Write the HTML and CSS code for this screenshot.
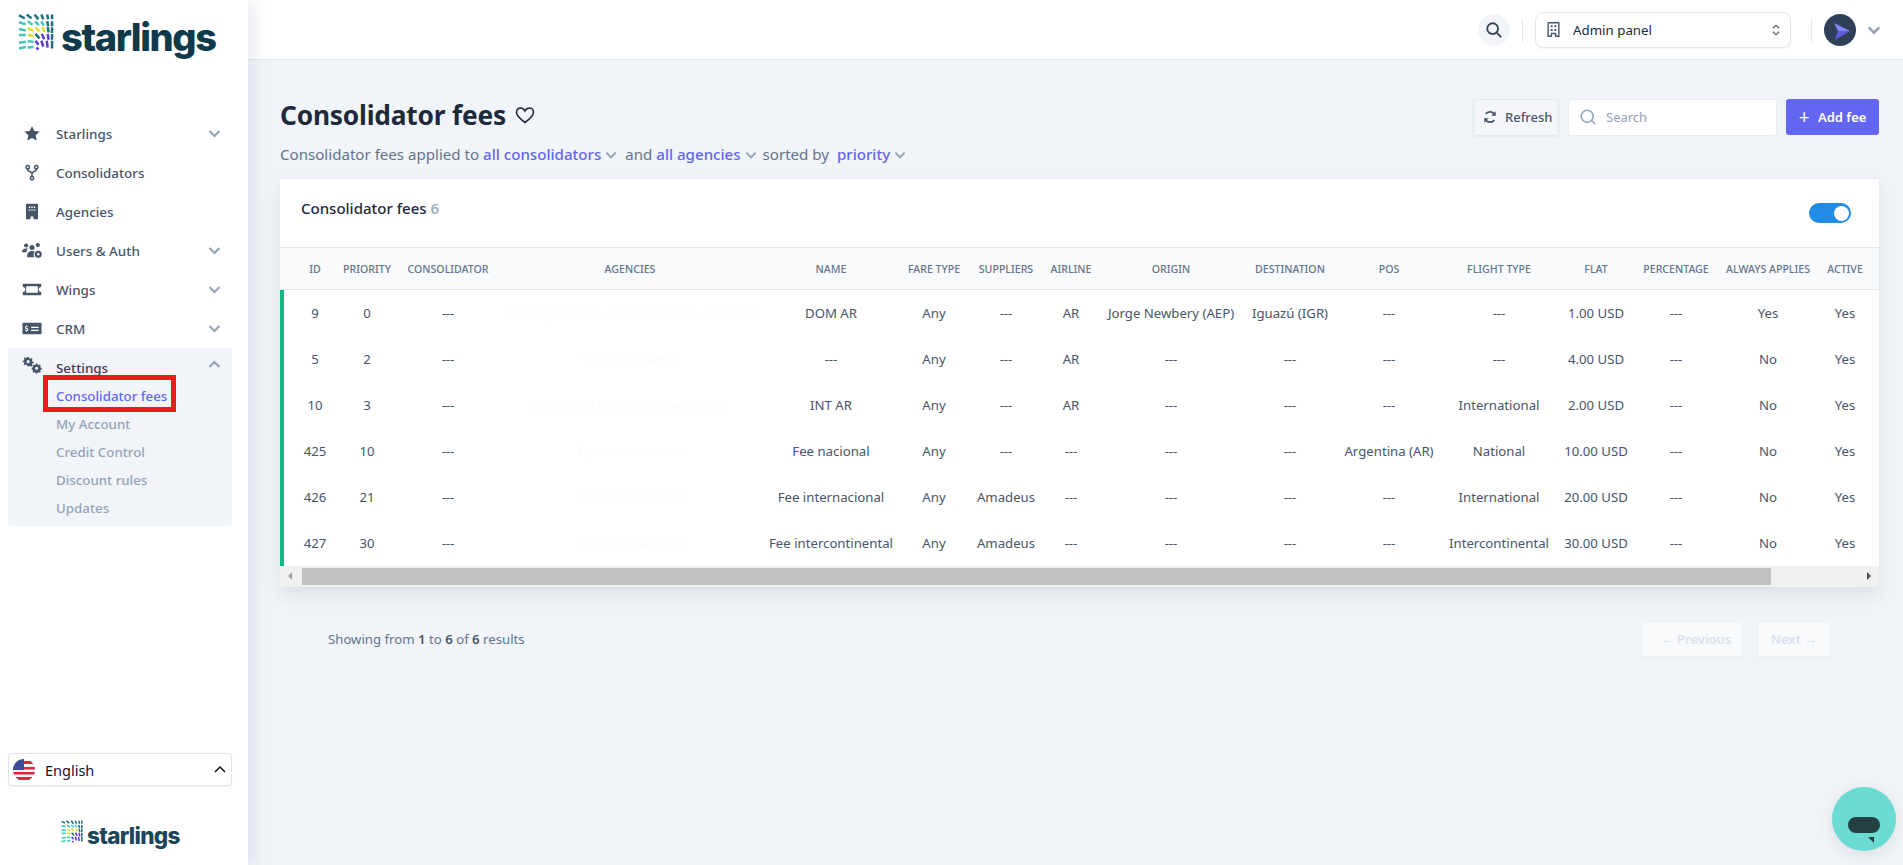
FILE: index.html
```html
<!DOCTYPE html>
<html lang="en">
<head>
    <meta charset="UTF-8">
    <title>Consolidator fees</title>
    <link rel="stylesheet" href="styles.css">
</head>
<body>
    <svg class="defs" width="0" height="0">
        <symbol id="mark" viewBox="0 0 37 38">
            <g fill="none" stroke-width="2.600" stroke-linecap="butt">
                <path stroke="#1f6f7d" d="M1 2l6 3M9 1l5 4M17 1l4 5M24 1l2 5M30 1l1 5M35 1v5M30 8l1 5M35 8v5M30.500 14l1 5.500M35 14v6M18 21l4 4.500M35 21v6M35 28v8"/>
                <path stroke="#45c7bb" d="M1 9l7 2M10 8l5 3.500M17.500 8l4 4M24 8l2.500 4.500M1 16l7 1.500M1 22h7M1 30l7-1M10 28.500l6 .5M1 36l7-1.500M10 35l6-.5"/>
                <path stroke="#dfe02a" d="M10 15l6 3M18 14.500l4 4M25 14l2.500 5M10 21.500l6 2"/>
                <path stroke="#5a3fd4" d="M24.500 21l2.500 5.500M30.500 21l1 6M18 28l3 4M24 28l2 6M29.500 28l1 7M19 35l2 2"/>
            </g>
        </symbol>
    </svg>

    <aside class="sidebar">
        <div class="logo">
            <svg class="logo-mark"><use href="#mark"/></svg>
            <span class="logo-text">starlings</span>
        </div>

        <nav class="nav">
            <a class="nav-item">
                <svg class="nav-icon" viewBox="0 0 24 24"><path d="M12 1.500l3.200 6.900 7.500.9-5.500 5.200 1.500 7.500L12 18.300l-6.700 3.700 1.500-7.500L1.300 9.300l7.500-.9z"/></svg>
                <span class="nav-label">Starlings</span>
                <svg class="chev" viewBox="0 0 12 12"><path d="M2 4l4 4 4-4"/></svg>
            </a>
            <a class="nav-item">
                <svg class="nav-icon line" viewBox="0 0 24 24"><circle cx="6" cy="4.500" r="2.400"/><circle cx="18" cy="4.500" r="2.400"/><circle cx="12" cy="20" r="2.400"/><path d="M6 7v1.500c0 2.500 6 2 6 5v4M18 7v1.500c0 2.500-6 2-6 5"/></svg>
                <span class="nav-label">Consolidators</span>
            </a>
            <a class="nav-item">
                <svg class="nav-icon" viewBox="0 0 24 24"><path fill-rule="evenodd" d="M5 1h14a1.500 1.500 0 0 1 1.500 1.500V23H14v-4h-4v4H3.500V2.500A1.500 1.500 0 0 1 5 1zM7.500 5v2h2V5zm3.500 0v2h2V5zm3.500 0v2h2V5zM7.500 9v2h2V9zM11 9v2h2V9zm3.500 0v2h2V9z"/></svg>
                <span class="nav-label">Agencies</span>
            </a>
            <a class="nav-item">
                <svg class="nav-icon" viewBox="0 0 24 20"><circle cx="5" cy="4" r="2.500"/><circle cx="19" cy="3.500" r="2.500"/><circle cx="12" cy="6.500" r="3"/><path d="M0 12c0-3 2-4.500 4-4.500h3c-1 1-1.500 2.500-1.500 4.500zM6 18c0-5 2-7.500 6-7.500 1.500 0 2.500.3 3.500 1-1.500 1.500-2 3.500-1 6.500z"/><circle cx="19.500" cy="14.500" r="4.200"/><circle cx="19.500" cy="14.500" r="1.500" fill="#fff"/></svg>
                <span class="nav-label">Users &amp; Auth</span>
                <svg class="chev" viewBox="0 0 12 12"><path d="M2 4l4 4 4-4"/></svg>
            </a>
            <a class="nav-item">
                <svg class="nav-icon" viewBox="0 0 24 20"><path fill-rule="evenodd" d="M1 3h22v4a3 3 0 0 0 0 6v4H1v-4a3 3 0 0 0 0-6zM5 6v8h14V6z"/></svg>
                <span class="nav-label">Wings</span>
                <svg class="chev" viewBox="0 0 12 12"><path d="M2 4l4 4 4-4"/></svg>
            </a>
            <a class="nav-item">
                <svg class="nav-icon" viewBox="0 0 24 20"><path fill-rule="evenodd" d="M2 3h20a1.500 1.500 0 0 1 1.500 1.500v11A1.500 1.500 0 0 1 22 17H2a1.500 1.500 0 0 1-1.500-1.500v-11A1.500 1.500 0 0 1 2 3zm9 5v1.500h9V8zm0 3.500V13h9v-1.500zM5 6v1.200c-1 .2-1.500.8-1.500 1.600 0 1 .8 1.400 1.800 1.700.8.200 1 .4 1 .7s-.4.500-.9.500c-.6 0-1.200-.2-1.600-.5l-.4 1c.4.300 1 .5 1.600.6V14h1v-1.200c1-.2 1.600-.9 1.600-1.700 0-1-.8-1.500-1.800-1.800-.7-.2-1-.3-1-.6s.3-.4.8-.4 1 .1 1.400.3l.3-1c-.4-.2-.8-.3-1.300-.4V6z"/></svg>
                <span class="nav-label">CRM</span>
                <svg class="chev" viewBox="0 0 12 12"><path d="M2 4l4 4 4-4"/></svg>
            </a>
            <div class="nav-group">
                <a class="nav-item nav-item-open">
                    <svg class="nav-icon settings-icon" viewBox="0 0 24 22"><path fill-rule="evenodd" d="M6 0h2l.4 1.600 1.500.6 1.400-.9 1.400 1.400-.9 1.400.6 1.500 1.600.4v2l-1.600.4-.6 1.500.9 1.400-1.400 1.400-1.400-.9-1.500.6L8 12H6l-.4-1.600-1.500-.6-1.400.9-1.400-1.400.9-1.400-.6-1.500L0 7V5l1.600-.4.6-1.500-.9-1.400L2.700.3l1.400.9 1.500-.6zm1 4a2 2 0 1 0 0 4 2 2 0 0 0 0-4z"/><path fill-rule="evenodd" d="M17 8.500h2l.4 1.400 1.300.5 1.300-.7 1.400 1.400-.7 1.300.5 1.300 1.300.4v2l-1.300.4-.5 1.300.7 1.300-1.400 1.400-1.300-.7-1.300.5-.4 1.200h-2l-.4-1.200-1.300-.5-1.300.7-1.400-1.400.7-1.300-.5-1.300-1.300-.4v-2l1.300-.4.500-1.300-.7-1.300 1.400-1.400 1.300.7 1.300-.5zm1 4a2 2 0 1 0 0 4 2 2 0 0 0 0-4z"/></svg>
                    <span class="nav-label">Settings</span>
                    <svg class="chev" viewBox="0 0 12 12"><path d="M2 8l4-4 4 4"/></svg>
                </a>
                <a class="sub-item sub-active">Consolidator fees</a>
                <a class="sub-item">My Account</a>
                <a class="sub-item">Credit Control</a>
                <a class="sub-item">Discount rules</a>
                <a class="sub-item">Updates</a>
            </div>
        </nav>

        <div class="sidebar-bottom">
            <div class="lang">
                <svg class="flag" viewBox="0 0 22 22">
                    <defs><clipPath id="flagClip"><circle cx="11" cy="11" r="11"/></clipPath></defs>
                    <g clip-path="url(#flagClip)">
                        <rect width="22" height="22" fill="#f2f2f2"/>
                        <path fill="#d8283f" d="M0 2h22v3H0zM0 8h22v2.500H0zM0 13h22v2.500H0zM0 18h22v3H0z"/>
                        <rect width="11" height="11" fill="#3d4f9a"/>
                    </g>
                </svg>
                <span class="lang-name">English</span>
                <svg class="lang-chev" viewBox="0 0 12 12"><path d="M1 8l5-5 5 5"/></svg>
            </div>
            <div class="logo-small">
                <svg class="logo-small-mark"><use href="#mark"/></svg>
                <span class="logo-small-text">starlings</span>
            </div>
        </div>
    </aside>

    <div class="content">
        <header class="topbar">
            <button class="top-search">
                <svg viewBox="0 0 20 20"><circle cx="8.500" cy="8.500" r="6"/><path d="M13 13l5 5"/></svg>
            </button>
            <span class="top-divider"></span>
            <div class="panel-select">
                <svg class="panel-icon" viewBox="0 0 14 18"><path fill-rule="evenodd" d="M1.500 1h11a1 1 0 0 1 1 1v15H8.500v-3h-3v3H.5V2a1 1 0 0 1 1-1zm.5 1.500V15.500h2V12.500h6v3h2V2.500zM4 4.500h2v2H4zm4 0h2v2H8zM4 8.500h2v2H4zm4 0h2v2H8z"/></svg>
                <span class="panel-name">Admin panel</span>
                <svg class="panel-arrows" viewBox="0 0 10 16"><path d="M1.500 6L5 2.500 8.500 6M1.500 10L5 13.500 8.500 10"/></svg>
            </div>
            <span class="top-divider top-divider-b"></span>
            <div class="avatar">
                <svg viewBox="0 0 32 32"><path fill="#8784f8" d="M10 9l16 8H14z"/><path fill="#5f5be0" d="M11 26l3-9h12z"/></svg>
            </div>
            <svg class="chev user-chev" viewBox="0 0 12 12"><path d="M2 4l4 4 4-4"/></svg>
        </header>

        <main class="main">
            <div class="page-head">
                <div>
                    <h1 class="page-title">Consolidator fees
                        <svg class="heart" viewBox="0 0 20 18"><path d="M10 16.500C4 12 1.500 9.500 1.500 6.200 1.500 3.700 3.400 2 5.500 2 7.300 2 9 3 10 5c1-2 2.700-3 4.500-3 2.100 0 4 1.700 4 4.200 0 3.300-2.500 5.800-8.500 10.300z"/></svg>
                    </h1>
                    <p class="page-sub">
                        Consolidator fees applied to <a class="filter">all consolidators</a><svg class="chev sub-chev" viewBox="0 0 12 12"><path d="M2 4l4 4 4-4"/></svg>
                        <span class="gap">and</span> <a class="filter">all agencies</a><svg class="chev sub-chev" viewBox="0 0 12 12"><path d="M2 4l4 4 4-4"/></svg>
                        <span class="gap gap-b">sorted by</span> <a class="filter filter-b">priority</a><svg class="chev sub-chev" viewBox="0 0 12 12"><path d="M2 4l4 4 4-4"/></svg>
                    </p>
                </div>
                <div class="page-actions">
                    <button class="btn-refresh">
                        <svg viewBox="0 0 16 16"><path d="M13.500 6A6 6 0 0 0 3 4.500M2.500 10A6 6 0 0 0 13 11.500"/><path class="fill" d="M14.500 1.500v5h-5zM1.500 14.500v-5h5z"/></svg>
                        Refresh
                    </button>
                    <div class="search">
                        <svg viewBox="0 0 20 20"><circle cx="8.500" cy="8.500" r="7"/><path d="M14 14l4 4"/></svg>
                        <span>Search</span>
                    </div>
                    <button class="btn-add"><span class="plus">+</span> Add fee</button>
                </div>
            </div>

            <section class="card">
                <div class="card-head">
                    <div class="card-title">Consolidator fees <span class="count">6</span></div>
                    <span class="toggle"></span>
                </div>
                <table class="fees">
                    <thead>
                        <tr>
                            <th class="c-id">ID</th><th class="c-pri">PRIORITY</th><th class="c-con">CONSOLIDATOR</th><th class="c-age">AGENCIES</th><th class="c-name">NAME</th><th class="c-fare">FARE TYPE</th><th class="c-sup">SUPPLIERS</th><th class="c-air">AIRLINE</th><th class="c-ori">ORIGIN</th><th class="c-des">DESTINATION</th><th class="c-pos">POS</th><th class="c-fli">FLIGHT TYPE</th><th class="c-fla">FLAT</th><th class="c-per">PERCENTAGE</th><th class="c-alw">ALWAYS APPLIES</th><th class="c-act">ACTIVE</th>
                        </tr>
                    </thead>
                    <tbody>
                        <tr><td>9</td><td>0</td><td>---</td><td class="faint">Starlings Demo, Gustavo Travel, Gus Intal</td><td>DOM AR</td><td>Any</td><td>---</td><td>AR</td><td>Jorge Newbery (AEP)</td><td>Iguazú (IGR)</td><td>---</td><td>---</td><td>1.00 USD</td><td>---</td><td>Yes</td><td>Yes</td></tr>
                        <tr><td>5</td><td>2</td><td>---</td><td class="faint">Starlings Demo</td><td>---</td><td>Any</td><td>---</td><td>AR</td><td>---</td><td>---</td><td>---</td><td>---</td><td>4.00 USD</td><td>---</td><td>No</td><td>Yes</td></tr>
                        <tr><td>10</td><td>3</td><td>---</td><td class="faint">Starlings Demo, Gustavo Travel</td><td>INT AR</td><td>Any</td><td>---</td><td>AR</td><td>---</td><td>---</td><td>---</td><td>International</td><td>2.00 USD</td><td>---</td><td>No</td><td>Yes</td></tr>
                        <tr><td>425</td><td>10</td><td>---</td><td class="faint">Operaciones test</td><td>Fee nacional</td><td>Any</td><td>---</td><td>---</td><td>---</td><td>---</td><td>Argentina (AR)</td><td>National</td><td>10.00 USD</td><td>---</td><td>No</td><td>Yes</td></tr>
                        <tr><td>426</td><td>21</td><td>---</td><td class="faint">Operaciones test</td><td>Fee internacional</td><td>Any</td><td>Amadeus</td><td>---</td><td>---</td><td>---</td><td>---</td><td>International</td><td>20.00 USD</td><td>---</td><td>No</td><td>Yes</td></tr>
                        <tr><td>427</td><td>30</td><td>---</td><td class="faint">Operaciones test</td><td>Fee intercontinental</td><td>Any</td><td>Amadeus</td><td>---</td><td>---</td><td>---</td><td>---</td><td>Intercontinental</td><td>30.00 USD</td><td>---</td><td>No</td><td>Yes</td></tr>
                    </tbody>
                </table>
                <div class="scrollbar">
                    <span class="arrow-left"></span>
                    <span class="thumb"></span>
                    <span class="arrow-right"></span>
                </div>
            </section>

            <div class="pager">
                <div class="pager-text">Showing from <b>1</b> to <b>6</b> of <b>6</b> results</div>
                <div class="pager-btns">
                    <button class="page-btn page-prev">← Previous</button>
                    <button class="page-btn page-next">Next →</button>
                </div>
            </div>
        </main>
    </div>

    <div class="highlight"></div>
    <button class="chat">
        <svg viewBox="0 0 32 26"><rect width="32" height="16" rx="8"/><path d="M20 20h6v6z"/></svg>
    </button>
</body>
</html>
```

FILE: styles.css
```css
* {
    box-sizing: border-box;
}
html, body {
    height: 100%;
}
body {
    margin: 0;
    display: flex;
    height: 865px;
    overflow: hidden;
    font-family: "Noto Sans", "Open Sans", sans-serif;
    font-size: 13px;
    color: #475569;
    background: #f1f5f9;
}
button {
    font-family: inherit;
    cursor: pointer;
}
.defs {
    position: absolute;
}

/* sidebar */
.sidebar {
    width: 248px;
    flex: none;
    background: #fff;
    display: flex;
    flex-direction: column;
    box-shadow: 6px 0 16px rgba(100,116,139,0.14);
    z-index: 2;
}
.logo {
    height: 60px;
    padding: 13px 0 0 18px;
    display: flex;
    align-items: flex-start;
    gap: 7px;
}
.logo-mark {
    width: 36px;
    height: 38px;
}
.logo-text {
    margin-top: 5px;
    font-family: "Inter", "Noto Sans", sans-serif;
    font-size: 38px;
    line-height: 38px;
    font-weight: 800;
    letter-spacing: -1.400px;
    color: #0f3a4c;
}
.nav {
    margin-top: 54px;
    padding: 0 16px 0 8px;
    flex: 1;
}
.nav-item {
    display: flex;
    align-items: center;
    height: 39px;
    padding: 0 10px 0 14px;
    color: #475569;
    font-size: 13.400px;
    font-weight: 500;
}
.nav-icon {
    width: 20px;
    height: 17px;
    fill: #475569;
    flex: none;
    margin-right: 14px;
}
.nav-icon.line {
    fill: none;
    stroke: #475569;
    stroke-width: 2.200;
}
.settings-icon {
    margin-top: -5px;
}
.nav-label {
    flex: 1;
}
.chev {
    width: 15px;
    height: 15px;
    fill: none;
    stroke: #94a3b8;
    stroke-width: 1.700;
    flex: none;
}
.nav-group {
    background: #f1f5f9;
    border-radius: 3px;
    height: 178px;
}
.nav-item-open {
    height: 34px;
    padding-top: 5px;
    color: #334155;
}
.nav-item-open .chev {
    margin-top: -6px;
}
.sub-item {
    display: block;
    height: 28px;
    line-height: 28px;
    padding-left: 48px;
    color: #94a3b8;
    font-size: 13.300px;
    font-weight: 500;
}
.sub-active {
    color: #6366f1;
}
.sidebar-bottom {
    padding: 0 16px 16px 8px;
}
.lang {
    height: 33px;
    border: 1px solid #dfe3ea;
    border-radius: 4px;
    box-shadow: 0 1px 2px rgba(0,0,0,0.06);
    display: flex;
    align-items: center;
    padding: 0 5px 0 4px;
}
.flag {
    width: 22px;
    height: 22px;
    flex: none;
}
.lang-name {
    flex: 1;
    margin-left: 10px;
    font-size: 14.500px;
    color: #0f172a;
}
.lang-chev {
    width: 12px;
    height: 12px;
    fill: none;
    stroke: #111;
    stroke-width: 1.500;
}
.logo-small {
    display: flex;
    align-items: flex-start;
    gap: 4px;
    margin-top: 34px;
    padding-left: 53px;
    height: 29px;
}
.logo-small-mark {
    width: 22px;
    height: 23px;
}
.logo-small-text {
    margin-top: 4px;
    font-family: "Inter", "Noto Sans", sans-serif;
    font-size: 22.500px;
    line-height: 24px;
    font-weight: 800;
    letter-spacing: -0.700px;
    color: #1b4658;
}

/* topbar */
.content {
    flex: 1;
    min-width: 0;
    display: flex;
    flex-direction: column;
}
.topbar {
    height: 60px;
    flex: none;
    background: #fff;
    border-bottom: 1px solid #e2e8f0;
    display: flex;
    align-items: center;
    justify-content: flex-end;
    padding-right: 21px;
}
.top-search {
    width: 32px;
    height: 32px;
    border: none;
    border-radius: 50%;
    background: #f1f5f9;
    padding: 7px;
}
.top-search svg {
    display: block;
    fill: none;
    stroke: #334155;
    stroke-width: 2;
}
.top-divider {
    width: 1px;
    height: 24px;
    background: #e2e8f0;
    margin: 0 12px;
}
.top-divider-b {
    margin: 0 12px 0 20px;
}
.panel-select {
    width: 256px;
    height: 36px;
    border: 1px solid #e2e8f0;
    border-radius: 8px;
    box-shadow: 0 1px 2px rgba(0,0,0,0.05);
    display: flex;
    align-items: center;
    padding: 0 9px 0 11px;
}
.panel-icon {
    width: 13px;
    height: 17px;
    fill: #475569;
    flex: none;
}
.panel-name {
    flex: 1;
    margin-left: 13px;
    font-size: 13.300px;
    color: #1e293b;
}
.panel-arrows {
    width: 10px;
    height: 14px;
    fill: none;
    stroke: #475569;
    stroke-width: 1.300;
}
.avatar {
    width: 32px;
    height: 32px;
    border-radius: 50%;
    background: #2e3f58;
}
.avatar svg {
    display: block;
}
.user-chev {
    width: 16px;
    height: 16px;
    margin-left: 10px;
    stroke-width: 2;
}

/* main */
.main {
    flex: 1;
    padding: 39px 24px 0 32px;
}
.page-head {
    display: flex;
    justify-content: space-between;
    align-items: flex-start;
}
.page-title {
    margin: 0;
    font-size: 26.300px;
    line-height: 32px;
    font-weight: 700;
    color: #1e293b;
    display: flex;
    align-items: center;
    gap: 9px;
    letter-spacing: -0.2px;
}
.heart {
    width: 20px;
    height: 18px;
    fill: none;
    stroke: #1e293b;
    stroke-width: 1.600;
}
.page-sub {
    margin: 13px 0 0;
    font-size: 15.100px;
    line-height: 20px;
    color: #64748b;
}
.filter {
    color: #6366f1;
    font-weight: 500;
}
.filter-b {
    margin-left: 4px;
}
.gap {
    margin-left: 3px;
}
.gap-b {
    margin-left: 1px;
}
.sub-chev {
    width: 14px;
    height: 14px;
    margin-left: 3px;
    vertical-align: -2px;
}
.page-actions {
    display: flex;
    gap: 9px;
}
.btn-refresh {
    width: 86px;
    height: 37px;
    border: 1px solid #e2e8f0;
    border-radius: 3px;
    background: #f4f6fa;
    box-shadow: 0 1px 2px rgba(0,0,0,0.05);
    color: #475569;
    font-size: 13px;
    font-weight: 500;
    display: flex;
    align-items: center;
    gap: 8px;
    padding: 0 0 1px 9px;
}
.btn-refresh svg {
    width: 14px;
    height: 14px;
    fill: none;
    stroke: #475569;
    stroke-width: 2;
}
.btn-refresh svg .fill {
    fill: #475569;
    stroke: none;
}
.search {
    width: 209px;
    height: 37px;
    background: #fff;
    border: 1px solid #e8edf3;
    border-radius: 3px;
    display: flex;
    align-items: center;
    padding: 0 0 1px 11px;
    gap: 9px;
    color: #94a3b8;
    font-size: 13px;
}
.search svg {
    width: 17px;
    height: 17px;
    fill: none;
    stroke: #94a3b8;
    stroke-width: 1.800;
}
.btn-add {
    width: 93px;
    height: 36px;
    border: none;
    border-radius: 3px;
    background: #6366f1;
    color: #fff;
    font-size: 13px;
    font-weight: 600;
}
.plus {
    font-size: 19px;
    font-weight: 400;
    line-height: 13px;
    margin-right: 5px;
    vertical-align: -2px;
}

/* table card */
.card {
    margin-top: 14px;
    background: #fff;
    border-radius: 2px;
    border-top: 1px solid #e5eaf1;
    box-shadow: 0 8px 18px rgba(100,116,139,0.16);
}
.card-head {
    height: 68px;
    padding: 19px 28px 0 21px;
    display: flex;
    justify-content: space-between;
    align-items: flex-start;
}
.card-title {
    font-size: 15px;
    font-weight: 500;
    color: #1e293b;
    line-height: 20px;
}
.count {
    color: #94a3b8;
}
.toggle {
    width: 42px;
    height: 20px;
    margin-top: 5px;
    border-radius: 10px;
    background: #228be6;
    position: relative;
}
.toggle::after {
    content: "";
    position: absolute;
    top: 2.500px;
    right: 2.500px;
    width: 15px;
    height: 15px;
    border-radius: 50%;
    background: #fff;
}
.fees {
    width: 100%;
    border-collapse: separate;
    border-spacing: 0;
    table-layout: fixed;
    font-size: 13.200px;
}
.fees th {
    height: 43px;
    background: #f8fafc;
    border-top: 1px solid #e2e8f0;
    border-bottom: 1px solid #e2e8f0;
    font-size: 10.600px;
    font-weight: 500;
    color: #64748b;
    text-align: center;
    white-space: nowrap;
    padding: 0;
}
.fees td {
    height: 46px;
    text-align: center;
    white-space: nowrap;
    padding: 0;
    color: #475569;
}
.fees td:first-child {
    box-shadow: inset 4px 0 0 #10b981;
}
.fees td:first-child, .fees th:first-child {
    padding-left: 8px;
}
.fees td:last-child, .fees th:last-child {
    padding-right: 15px;
}
.fees .faint {
    color: #fcfcfd;
}
.c-id { width: 62px; }
.c-pri { width: 50px; }
.c-con { width: 112px; }
.c-age { width: 252px; }
.c-name { width: 150px; }
.c-fare { width: 56px; }
.c-sup { width: 88px; }
.c-air { width: 42px; }
.c-ori { width: 158px; }
.c-des { width: 80px; }
.c-pos { width: 118px; }
.c-fli { width: 102px; }
.c-fla { width: 92px; }
.c-per { width: 68px; }
.c-alw { width: 116px; }
.c-act { width: 53px; }
.scrollbar {
    height: 21px;
    background: #f1f1f1;
    position: relative;
}
.thumb {
    position: absolute;
    left: 22px;
    top: 2px;
    bottom: 2px;
    width: 1469px;
    background: #c1c1c1;
}
.arrow-left {
    position: absolute;
    left: 8px;
    top: 6px;
    border: 4.500px solid transparent;
    border-right-color: #a3a3a3;
    border-left-width: 0;
}
.arrow-right {
    position: absolute;
    right: 8px;
    top: 6px;
    border: 4.500px solid transparent;
    border-left-color: #505050;
    border-right-width: 0;
}

/* pager */
.pager {
    display: flex;
    justify-content: space-between;
    align-items: flex-start;
    margin-top: 34px;
    padding: 0 48px;
}
.pager-text {
    margin-top: 9px;
    font-size: 13.200px;
    line-height: 18px;
    color: #64748b;
}
.pager-text b {
    color: #475569;
    font-weight: 600;
}
.pager-btns {
    display: flex;
    gap: 14px;
}
.page-btn {
    height: 36px;
    padding: 0;
    border: 1px solid #eef2f7;
    border-radius: 3px;
    background: #f8fafc;
    box-shadow: 0 1px 2px rgba(0,0,0,0.04);
    color: #dbe2ec;
    font-size: 13px;
    font-weight: 600;
    white-space: nowrap;
}
.page-prev {
    width: 102px;
    padding-left: 8px;
}
.page-next {
    width: 74px;
}

/* overlays */
.highlight {
    position: absolute;
    left: 43px;
    top: 375px;
    width: 133px;
    height: 37px;
    border: 5px solid #ec1c1c;
    z-index: 3;
}
.chat {
    position: absolute;
    left: 1832px;
    top: 787px;
    width: 64px;
    height: 64px;
    border: none;
    border-radius: 50%;
    background: #6cdbd3;
    box-shadow: 0 4px 16px rgba(0,0,0,0.1);
    padding: 22px 16px 0;
    z-index: 3;
}
.chat svg {
    display: block;
    width: 32px;
    height: 26px;
    fill: #244141;
}
```
